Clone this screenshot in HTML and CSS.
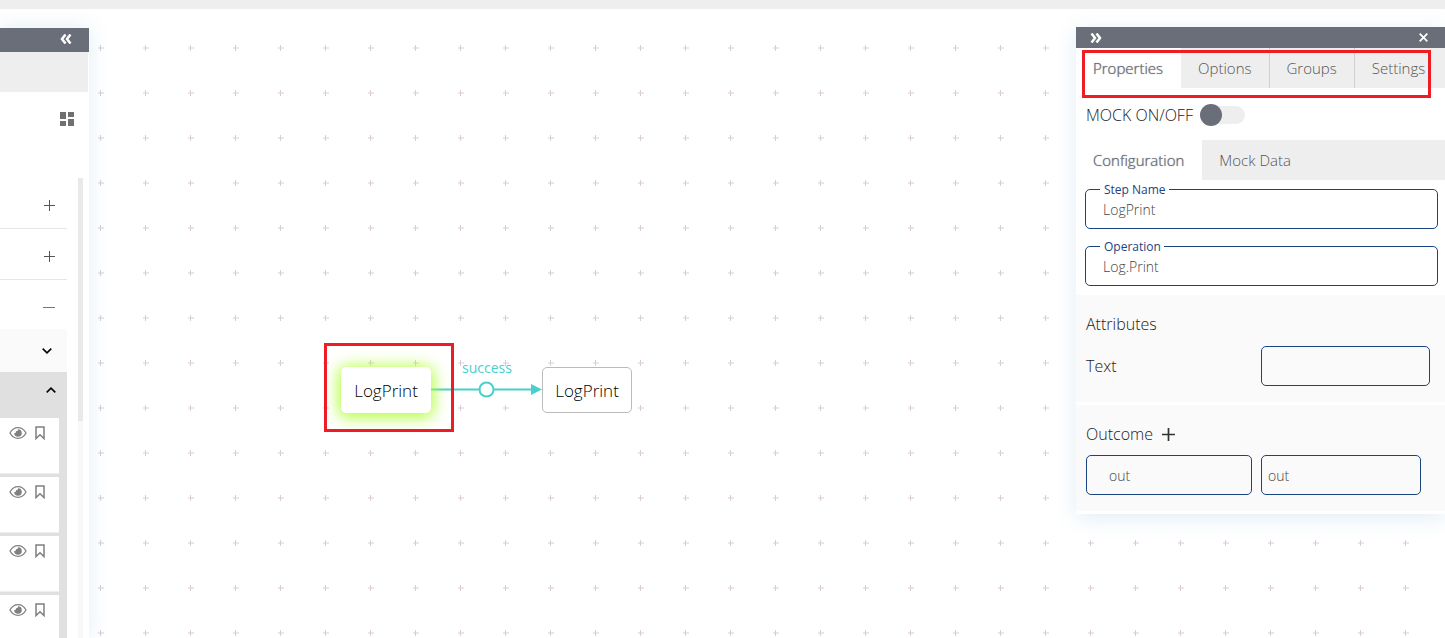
FILE: index.html
```html
<!DOCTYPE html>
<html lang="en">
<head>
  <meta charset="utf-8">
  <title>Flow Designer</title>
  <link rel="stylesheet" href="styles.css">
</head>
<body>
  <!-- Icons used more than once -->
  <svg class="icon-defs" aria-hidden="true">
    <symbol id="eye" viewBox="0 0 18 14">
      <path d="M1 7C3 3.4 5.8 1.7 9 1.7S15 3.4 17 7C15 10.6 12.2 12.3 9 12.3S3 10.6 1 7Z" fill="none" stroke="currentColor" stroke-width="1.3"/>
      <path d="M9 3.200A3.800 3.800 0 1 1 5.200 7H7.500A1.500 1.500 0 0 0 9 5.500Z" fill="currentColor"/>
      <circle cx="9.3" cy="7.2" r="2.7" fill="currentColor"/>
    </symbol>
    <symbol id="bookmark" viewBox="0 0 10 14">
      <path d="M1 1H9V12.600L5 8.800L1 12.600Z" fill="none" stroke="currentColor" stroke-width="1.500"/>
    </symbol>
  </svg>

  <header class="top-bar"></header>

  <main class="workspace">
    <section class="canvas">
      <svg class="canvas-drawing" aria-hidden="true">
        <defs>
          <pattern id="crosses" x="78" y="16" width="45" height="45" patternUnits="userSpaceOnUse">
            <path d="M22 20h1v6h-1z" fill="#d9cbd9"/>
            <path d="M20 22h6v2h-6z" fill="#eee4ee"/>
            <path d="M22 22h1v2h-1z" fill="#d9cbd9"/>
          </pattern>
        </defs>
        <rect width="100%" height="100%" fill="url(#crosses)"/>
        <path d="M431 380.500H533" stroke="#48d1cc" stroke-width="2"/>
        <path d="M531 375L542 380.500L531 386Z" fill="#48d1cc"/>
        <circle cx="486.500" cy="380.500" r="7" fill="#fff" stroke="#48d1cc" stroke-width="2"/>
      </svg>
      <div class="node node-selected">LogPrint</div>
      <div class="node node-next">LogPrint</div>
      <div class="link-label">success</div>
      <div class="marker marker-node"></div>
    </section>

    <aside class="sidebar">
      <div class="sidebar-header">
        <button type="button" class="icon-button" aria-label="Collapse">
          <svg width="12" height="10" viewBox="0 0 12 10"><path d="M5.500 .5L2 5L5.500 9.500M10.500 .5L7 5L10.500 9.500" fill="none" stroke="#fff" stroke-width="2.500"/></svg>
        </button>
      </div>
      <div class="sidebar-strip"></div>
      <div class="sidebar-tools">
        <button type="button" class="icon-button" aria-label="View">
          <svg width="14" height="14" viewBox="0 0 14 14" fill="#707070"><path d="M0 0h6v7H0zM8 0h6v5H8zM0 9h6v5H0zM8 7h6v7H8z"/></svg>
        </button>
      </div>
      <div class="sidebar-body">
        <div class="step-list">
          <button type="button" class="group-row" aria-label="Expand">
            <svg width="11" height="12" viewBox="0 0 11 12"><path d="M0 6.500H11M5.500 1V12" stroke="#555" stroke-width="1"/></svg>
          </button>
          <button type="button" class="group-row" aria-label="Expand">
            <svg width="11" height="12" viewBox="0 0 11 12"><path d="M0 6.500H11M5.500 1V12" stroke="#555" stroke-width="1"/></svg>
          </button>
          <button type="button" class="group-row group-open" aria-label="Collapse">
            <svg width="12" height="12" viewBox="0 0 12 12"><path d="M0 6.500H12" stroke="#777" stroke-width="1"/></svg>
          </button>
          <button type="button" class="sub-row" aria-label="Expand">
            <svg width="10" height="6" viewBox="0 0 10 6"><path d="M.7 .7L5 4.800L9.300 .7" fill="none" stroke="#000" stroke-width="1.600"/></svg>
          </button>
          <button type="button" class="sub-row sub-open" aria-label="Collapse">
            <svg width="10" height="6" viewBox="0 0 10 6"><path d="M.7 5.300L5 1.200L9.300 5.300" fill="none" stroke="#000" stroke-width="1.600"/></svg>
          </button>
          <div class="cards">
            <div class="card">
              <button type="button" class="icon-button" aria-label="View"><svg width="18" height="14"><use href="#eye"/></svg></button>
              <button type="button" class="icon-button" aria-label="Bookmark"><svg width="10" height="14"><use href="#bookmark"/></svg></button>
            </div>
            <div class="card">
              <button type="button" class="icon-button" aria-label="View"><svg width="18" height="14"><use href="#eye"/></svg></button>
              <button type="button" class="icon-button" aria-label="Bookmark"><svg width="10" height="14"><use href="#bookmark"/></svg></button>
            </div>
            <div class="card">
              <button type="button" class="icon-button" aria-label="View"><svg width="18" height="14"><use href="#eye"/></svg></button>
              <button type="button" class="icon-button" aria-label="Bookmark"><svg width="10" height="14"><use href="#bookmark"/></svg></button>
            </div>
            <div class="card">
              <button type="button" class="icon-button" aria-label="View"><svg width="18" height="14"><use href="#eye"/></svg></button>
              <button type="button" class="icon-button" aria-label="Bookmark"><svg width="10" height="14"><use href="#bookmark"/></svg></button>
            </div>
          </div>
        </div>
        <div class="scroll-track"><div class="scroll-thumb"></div></div>
      </div>
    </aside>

    <aside class="panel">
      <div class="panel-header">
        <button type="button" class="icon-button" aria-label="Collapse">
          <svg width="12" height="10" viewBox="0 0 12 10"><path d="M1.500 .5L5 5L1.500 9.500M6.500 .5L10 5L6.500 9.500" fill="none" stroke="#fff" stroke-width="2.500"/></svg>
        </button>
        <button type="button" class="icon-button" aria-label="Close">
          <svg width="9" height="9" viewBox="0 0 9 9"><path d="M.7 .7L8.300 8.300M8.300 .7L.7 8.300" stroke="#fff" stroke-width="1.800"/></svg>
        </button>
      </div>

      <nav class="tabs">
        <button type="button" class="tab active">Properties</button>
        <button type="button" class="tab">Options</button>
        <button type="button" class="tab">Groups</button>
        <button type="button" class="tab">Settings</button>
      </nav>

      <div class="mock-row">
        <label for="mock">MOCK ON/OFF</label>
        <input type="checkbox" id="mock" class="switch">
      </div>

      <nav class="tabs sub-tabs">
        <button type="button" class="tab active">Configuration</button>
        <button type="button" class="tab">Mock Data</button>
      </nav>

      <div class="fields">
        <div class="field">
          <label for="step-name">Step Name</label>
          <input type="text" id="step-name" value="LogPrint">
        </div>
        <div class="field">
          <label for="operation">Operation</label>
          <input type="text" id="operation" value="Log.Print">
        </div>
      </div>

      <section class="section attributes">
        <h2>Attributes</h2>
        <div class="attribute-row">
          <label for="text">Text</label>
          <input type="text" id="text" class="box">
        </div>
      </section>

      <section class="section outcome">
        <div class="outcome-title">
          <h2>Outcome</h2>
          <button type="button" class="icon-button" aria-label="Add outcome">
            <svg width="13" height="13" viewBox="0 0 13 13"><path d="M0 6.500H13M6.500 0V13" stroke="#333" stroke-width="1.700"/></svg>
          </button>
        </div>
        <div class="outcome-row">
          <input type="text" class="box box-indent" value="out" aria-label="Outcome name">
          <input type="text" class="box" value="out" aria-label="Outcome value">
        </div>
      </section>

      <div class="marker marker-tabs"></div>
    </aside>
  </main>
</body>
</html>
```
FILE: styles.css
```css
* {
  box-sizing: border-box;
}

body {
  margin: 0;
  height: 100vh;
  display: flex;
  flex-direction: column;
  overflow: hidden;
  background-color: #fff;
  font-family: "Open Sans", "Noto Sans", sans-serif;
  font-size: 16px;
  font-weight: 300;
  color: #222;
}

button,
input {
  margin: 0;
  padding: 0;
  border: none;
  background: none;
  font: inherit;
  color: inherit;
}

button {
  cursor: pointer;
}

svg {
  display: block;
}

.icon-defs {
  position: absolute;
  width: 0;
  height: 0;
}

.icon-button {
  display: flex;
}

.top-bar {
  flex: none;
  height: 9px;
  background-color: #eee;
}

/* The canvas lies under both side panels */
.workspace {
  flex: 1;
  min-height: 0;
  display: grid;
  grid-template-columns: 89px 1fr 369px;
  grid-template-rows: minmax(0, 1fr);
}

.canvas {
  grid-column: 1 / -1;
  grid-row: 1;
  position: relative;
  overflow: hidden;
}

.canvas-drawing {
  width: 100%;
  height: 100%;
}

.node {
  position: absolute;
  display: flex;
  align-items: center;
  justify-content: center;
  width: 90px;
  height: 46px;
  border: 1px solid #bbb;
  border-radius: 5px;
  background-color: #fff;
  font-size: 17px;
  color: #000;
}

.node-selected {
  left: 341px;
  top: 358px;
  border-color: #fff;
  box-shadow: 0 2px 16px 2px #adff2f;
}

.node-next {
  left: 542px;
  top: 358px;
}

.link-label {
  position: absolute;
  left: 462px;
  top: 350px;
  font-size: 14px;
  font-weight: 400;
  line-height: 18px;
  color: #48d1cc;
}

.marker {
  position: absolute;
  border: 3px solid #ee1c25;
  pointer-events: none;
}

.marker-node {
  left: 324px;
  top: 334px;
  width: 130px;
  height: 89px;
}

.marker-tabs {
  left: 6px;
  right: 14px;
  top: 23px;
  height: 48px;
}

/* Sidebar */
.sidebar {
  grid-column: 1;
  grid-row: 1;
  z-index: 1;
  margin-top: 19px;
  display: flex;
  flex-direction: column;
  background-color: #fff;
  box-shadow: 0 0 20px rgba(70, 140, 190, 0.16);
}

.sidebar-header {
  flex: none;
  height: 24px;
  padding: 0 17px 2px 0;
  display: flex;
  align-items: center;
  justify-content: flex-end;
  background-color: #6a6e79;
}

.sidebar-strip {
  flex: none;
  height: 40px;
  margin-right: 1px;
  background-color: #eee;
}

.sidebar-tools {
  flex: none;
  height: 86px;
  padding: 20px 15px 0 0;
  display: flex;
  align-items: flex-start;
  justify-content: flex-end;
}

.sidebar-body {
  flex: 1;
  min-height: 0;
  display: flex;
  justify-content: space-between;
  padding-right: 6px;
}

.step-list {
  width: 67px;
  overflow: hidden;
}

.group-row,
.sub-row {
  width: 100%;
  display: flex;
  align-items: center;
  justify-content: flex-end;
}

.group-row {
  height: 51px;
  padding: 4px 12px 0 0;
  border-bottom: 1px solid #e6e6e6;
}

.group-open {
  height: 49px;
  border-bottom: none;
}

.sub-row {
  height: 44px;
  padding-right: 15px;
  background-color: #fafafa;
  border-bottom: 1px solid #e0e0e0;
}

.sub-open {
  padding: 0 11px 10px 0;
  background-color: #e0e0e0;
}

.cards {
  display: flex;
  flex-direction: column;
  gap: 3px;
  padding: 1px 8px 40px 0;
  background-color: #e0e0e0;
}

.card {
  height: 56px;
  padding: 8px 14px 0 0;
  display: flex;
  align-items: flex-start;
  justify-content: flex-end;
  gap: 8px;
  background-color: #fff;
  border-bottom: 1px solid #eee;
  color: #808080;
}

.scroll-track {
  width: 5px;
  background-color: #f8f8f8;
}

.scroll-thumb {
  height: 243px;
  background-color: #e9e9e9;
}

/* Properties panel */
.panel {
  grid-column: 3;
  grid-row: 1;
  z-index: 1;
  align-self: start;
  position: relative;
  margin-top: 18px;
  padding-bottom: 3px;
  background-color: #fff;
  box-shadow: 0 4px 20px rgba(70, 140, 190, 0.16);
}

.panel-header {
  height: 21px;
  padding: 0 17px 0 14px;
  display: flex;
  align-items: center;
  justify-content: space-between;
  background-color: #6a6e79;
}

.tabs {
  display: flex;
  height: 40px;
  background-color: #eee;
  font-size: 15px;
  color: #555;
}

.tab {
  padding: 0 17px;
  border-left: 1px solid #d0d0d0;
}

.tab.active {
  padding-right: 18px;
  border-left: none;
  background-color: #fff;
  color: #6a6e79;
  text-shadow: 0 0 1px #6a6e79;
}

.tab.active + .tab {
  border-left: none;
}

.mock-row {
  height: 52px;
  padding: 2px 10px 0;
  display: flex;
  align-items: center;
  gap: 7px;
}

.switch {
  appearance: none;
  display: flex;
  align-items: center;
  width: 45px;
  height: 18px;
  border-radius: 9px;
  background-color: #eee;
}

.switch::before {
  content: "";
  width: 22px;
  height: 22px;
  border-radius: 50%;
  background-color: #6a6e79;
}

.fields {
  display: flex;
  flex-direction: column;
  gap: 17px;
  padding: 9px 7px 9px 9px;
}

.field {
  position: relative;
}

.field label {
  position: absolute;
  left: 15px;
  top: -8px;
  padding: 0 3px 0 4px;
  background-color: #fff;
  font-size: 12px;
  font-weight: 400;
  line-height: 17px;
  color: #1a4480;
}

.field input,
.box {
  height: 40px;
  border: 1px solid #1a4480;
  border-radius: 5px;
  font-size: 14px;
  color: #444;
}

.field input {
  display: block;
  width: 100%;
  padding: 0 17px;
}

.section {
  padding: 17px 15px 16px 10px;
  background-color: #fafafa;
}

.section h2 {
  margin: 0;
  font-size: 16px;
  font-weight: 300;
  line-height: 24px;
}

.section + .section {
  margin-top: 3px;
}

.attribute-row {
  display: grid;
  grid-template-columns: 1fr 169px;
  align-items: center;
  padding-top: 10px;
}

.outcome-title {
  display: flex;
  align-items: center;
  gap: 9px;
  padding-bottom: 9px;
}

.outcome-row {
  display: grid;
  grid-template-columns: 166px 1fr;
  gap: 9px;
  padding-right: 9px;
}

.box {
  min-width: 0;
  padding: 0 6px;
}

.box-indent {
  padding-left: 22px;
}
```
